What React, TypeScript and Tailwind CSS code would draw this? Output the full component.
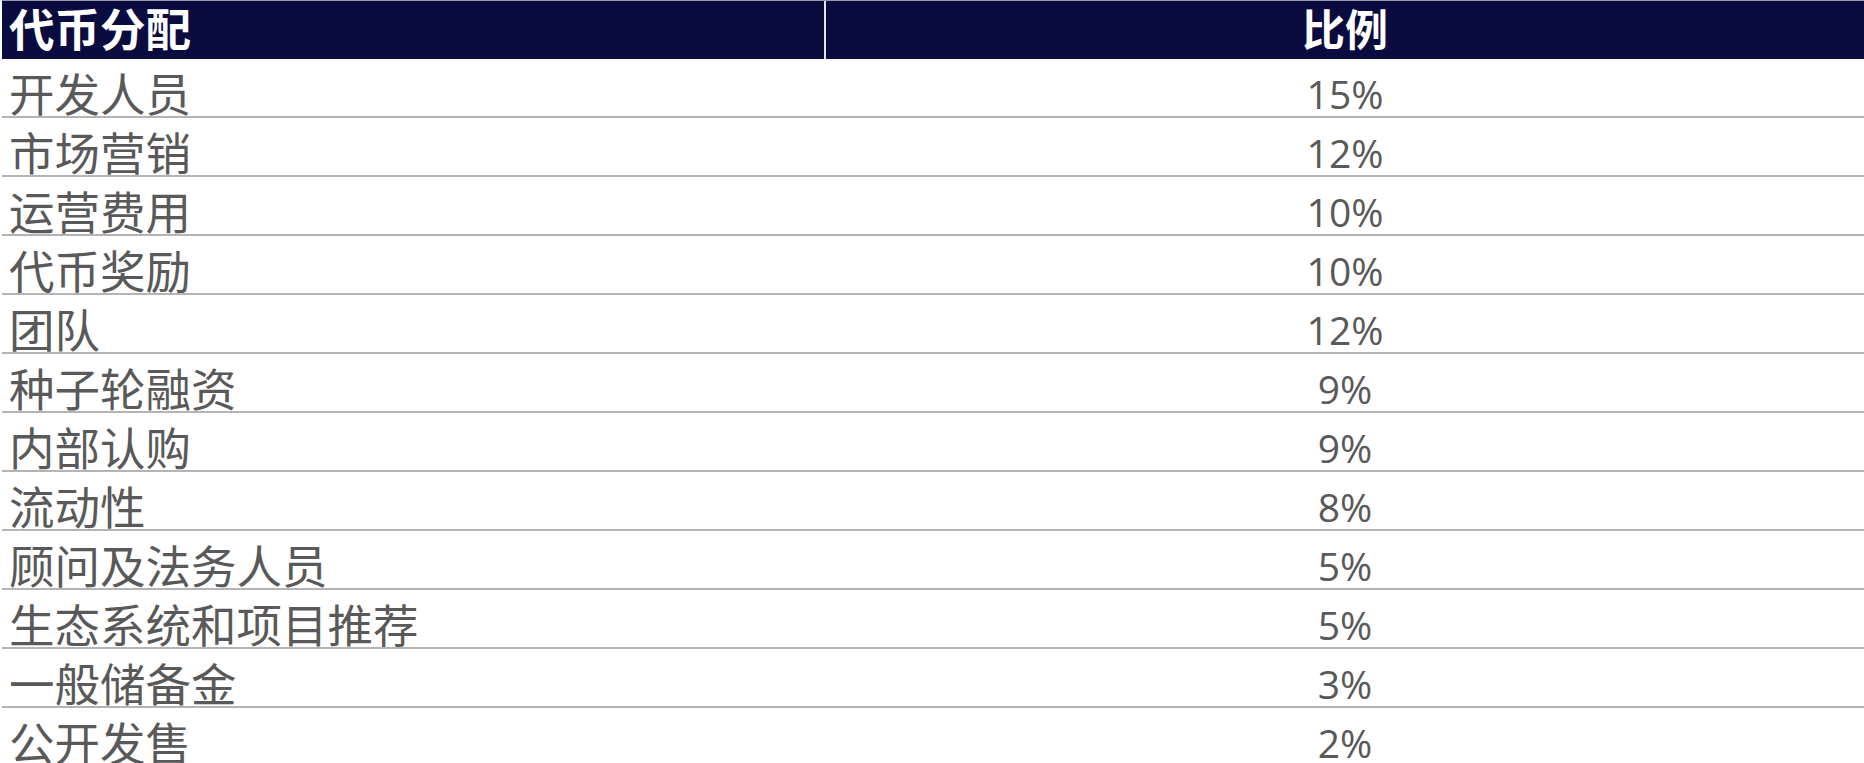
import React from 'react';

const rows = [
  { name: '开发人员', pct: '15%' },
  { name: '市场营销', pct: '12%' },
  { name: '运营费用', pct: '10%' },
  { name: '代币奖励', pct: '10%' },
  { name: '团队', pct: '12%' },
  { name: '种子轮融资', pct: '9%' },
  { name: '内部认购', pct: '9%' },
  { name: '流动性', pct: '8%' },
  { name: '顾问及法务人员', pct: '5%' },
  { name: '生态系统和项目推荐', pct: '5%' },
  { name: '一般储备金', pct: '3%' },
  { name: '公开发售', pct: '2%' },
];

const cjk = { fontFamily: '"Noto Sans CJK SC", "Noto Sans", sans-serif' };
const num = { fontFamily: '"Open Sans", "Noto Sans CJK SC", sans-serif' };

export default function App() {
  return (
    <div className="w-[1864px] h-[763px] overflow-hidden bg-white">
      <div className="ml-[2px]">
        {/* header */}
        <div className="grid grid-cols-[824px_1fr] h-[59px] bg-[#0a0b3e] border-t border-[#9a9aa8]">
          <div className="border-r-2 border-[#e6e6ee] pl-[7px] pt-[4px]">
            <div className="text-white font-bold text-[45.5px] leading-none" style={cjk}>代币分配</div>
          </div>
          <div className="flex justify-center pt-[5px]">
            <div className="text-white font-bold text-[43px] leading-none" style={cjk}>比例</div>
          </div>
        </div>
        {rows.map((r) => (
          <div key={r.name} className="grid grid-cols-[824px_1fr] h-[59px] border-b-2 border-[#b4b4b4]">
            <div className="pl-[7px] pt-[11px]">
              <div className="text-[#595959] text-[45.5px] leading-none" style={cjk}>{r.name}</div>
            </div>
            <div className="flex justify-center pt-[15px]">
              <div className="text-[#595959] text-[39px] leading-none" style={num}>{r.pct}</div>
            </div>
          </div>
        ))}
      </div>
    </div>
  );
}
